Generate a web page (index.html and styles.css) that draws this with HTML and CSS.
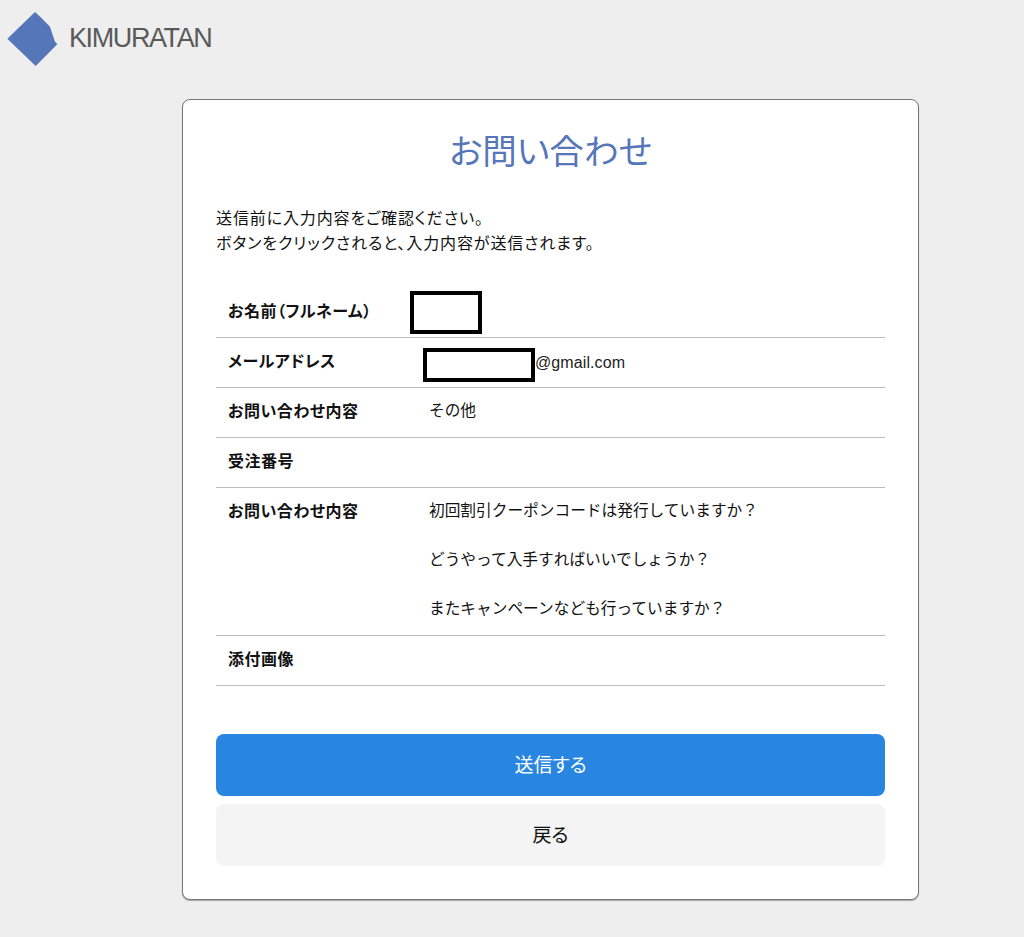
FILE: index.html
```html
<!DOCTYPE html>
<html lang="ja">
<head>
<meta charset="utf-8">
<title>お問い合わせ</title>
<link rel="stylesheet" href="styles.css">
</head>
<body>
<header class="site-header">
  <svg class="logo-mark" width="52" height="56" viewBox="0 0 52 56" aria-hidden="true">
    <polygon points="28,1 34.700,7.300 43,15.700 45.700,24 48,30.700 50.300,33.300 28.700,55 0.300,27.700" fill="#5577b9"/>
  </svg>
  <span class="logo-text">KIMURATAN</span>
</header>
<main class="card">
  <h1 class="title">お問い合わせ</h1>
  <p class="lead">送信前に入力内容をご確認ください。<br>ボタンをクリックされると、入力内容が送信されます。</p>
  <dl class="rows">
    <div class="row row-name">
      <dt>お名前（フルネーム）</dt>
      <dd><span class="redact redact-name"></span></dd>
    </div>
    <div class="row">
      <dt>メールアドレス</dt>
      <dd class="email"><span class="redact-mail"></span><span class="latin">@gmail.com</span></dd>
    </div>
    <div class="row">
      <dt>お問い合わせ内容</dt>
      <dd>その他</dd>
    </div>
    <div class="row">
      <dt>受注番号</dt>
      <dd></dd>
    </div>
    <div class="row">
      <dt>お問い合わせ内容</dt>
      <dd>初回割引クーポンコードは発行していますか？<br><br>どうやって入手すればいいでしょうか？<br><br>またキャンペーンなども行っていますか？</dd>
    </div>
    <div class="row">
      <dt>添付画像</dt>
      <dd></dd>
    </div>
  </dl>
  <div class="actions">
    <button class="btn btn-primary" type="button">送信する</button>
    <button class="btn btn-secondary" type="button">戻る</button>
  </div>
</main>
</body>
</html>
```

FILE: styles.css
```css
* { box-sizing: border-box; }
html, body { margin: 0; padding: 0; }
body {
  background: #eeeeee;
  color: #111;
  font-family: "Noto Sans CJK JP", "Noto Sans", sans-serif;
  font-size: 16px;
  font-feature-settings: "palt";
  height: 937px;
  overflow: hidden;
}
.site-header {
  display: flex;
  align-items: flex-start;
  height: 99px;
  padding: 11px 0 0 7px;
}
.logo-mark { flex: none; }
.logo-text {
  margin: 11px 0 0 10px;
  font-family: "Liberation Sans", sans-serif;
  font-size: 27px;
  line-height: 32px;
  letter-spacing: -1.4px;
  color: #5a5a5a;
}
.card {
  width: 737px;
  height: 801px;
  margin-left: 182px;
  padding: 0 33px;
  background: #fff;
  border: 1px solid #777;
  border-radius: 8px;
  box-shadow: 0 1px 1px rgba(0,0,0,.3);
}
.title {
  margin: 25px 0 0;
  text-align: center;
  color: #5577b9;
  font-size: 34.500px;
  font-weight: 400;
  line-height: 48px;
}
.lead {
  margin: 32px 0 0;
  line-height: 25px;
  font-size: 16px;
  letter-spacing: .88px;
}
.rows { margin: 33px 0 0; }
.row {
  position: relative;
  display: flex;
  border-bottom: 1px solid #bbb;
  padding: 10px 12px 14px;
  line-height: 24.600px;
  min-height: 50px;
}
.row dt {
  width: 201px;
  flex: none;
  font-weight: 700;
  font-size: 16px;
  letter-spacing: .5px;
}
.row dd {
  margin: 0;
  font-size: 15.700px;
  font-feature-settings: normal;
}
.redact { display: block; background: #fff; border: 4px solid #000; }
.redact-name {
  position: absolute;
  left: 194px;
  top: 3px;
  width: 72px;
  height: 43px;
}
.row dd.email {
  display: flex;
  align-items: center;
  height: 25px;
  margin: 4.500px 0 -4.500px;
}
.redact-mail {
  display: block;
  flex: none;
  width: 112px;
  height: 34px;
  margin-left: -6px;
  border: 4px solid #000;
}
.latin {
  margin-bottom: 3px;
  font-family: "Liberation Sans", sans-serif;
  font-size: 16px;
  letter-spacing: .1px;
  color: #222;
}
.actions {
  display: flex;
  flex-direction: column;
  gap: 8px;
  margin-top: 48px;
}
.btn {
  display: block;
  width: 100%;
  height: 62px;
  padding: 0 0 2px;
  border: 0;
  border-radius: 8px;
  font-family: inherit;
  font-feature-settings: inherit;
  font-size: 19px;
}
.btn-primary { background: #2886e0; color: #fff; }
.btn-secondary { background: #f4f4f4; color: #111; }
```
